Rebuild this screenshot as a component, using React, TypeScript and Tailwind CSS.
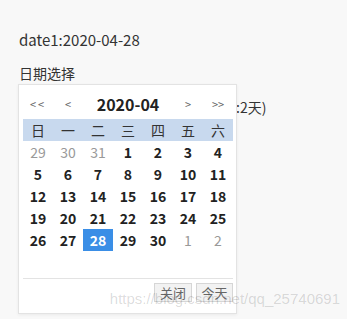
import React from 'react';

const weekDays = ['日', '一', '二', '三', '四', '五', '六'];

// 2020-04, starting Sunday 29 Mar
const days: { n: number; muted?: boolean; selected?: boolean }[] = [
  { n: 29, muted: true },
  { n: 30, muted: true },
  { n: 31, muted: true },
  ...Array.from({ length: 30 }, (_, i) => ({ n: i + 1, selected: i + 1 === 28 })),
  { n: 1, muted: true },
  { n: 2, muted: true },
];

function DatePicker() {
  return (
    <div className="absolute left-[18px] top-0 w-[219px] border border-[#e3e3e3] bg-white pl-1 pr-[3px] shadow-[0_1px_3px_rgba(0,0,0,0.06)]">
      {/* Header */}
      <div className="grid h-[34px] grid-cols-7 items-center pt-1 text-[#666]">
        <span className="text-center text-[11px] tracking-[2px]">&lt;&lt;</span>
        <span className="text-center text-[11px]">&lt;</span>
        <span className="col-span-3 text-center text-[16px] font-bold text-[#222]">2020-04</span>
        <span className="text-center text-[11px]">&gt;</span>
        <span className="text-center text-[11px]">&gt;&gt;</span>
      </div>

      {/* Week days */}
      <div className="grid h-[22px] grid-cols-7 items-center bg-[#c8d9ee] text-[14px] text-[#333]">
        {weekDays.map((d) => (
          <span key={d} className="text-center">
            {d}
          </span>
        ))}
      </div>

      {/* Days */}
      <div className="grid grid-cols-7">
        {days.map((d, i) => (
          <span
            key={i}
            className={
              d.selected
                ? 'flex h-[22px] items-center justify-center bg-[#3a8ee6] text-[14px] font-bold text-white'
                : d.muted
                  ? 'flex h-[22px] items-center justify-center text-[14px] text-[#999]'
                  : 'flex h-[22px] items-center justify-center text-[14px] font-bold text-[#222]'
            }
          >
            {d.n}
          </span>
        ))}
      </div>

      {/* Footer */}
      <div className="mt-[27px] flex justify-end gap-1 border-t border-[#e3e3e3] pb-[11px] pt-1">
        <button className="h-[19px] w-[38px] border border-[#d6d6d6] bg-[#f2f2f2] text-[13px] leading-none text-[#666]">
          关闭
        </button>
        <button className="h-[19px] w-[37px] border border-[#d6d6d6] bg-[#f2f2f2] text-[13px] leading-none text-[#666]">
          今天
        </button>
      </div>
    </div>
  );
}

export default function App() {
  return (
    <div className="relative h-[319px] w-[347px] overflow-hidden bg-[#f8f8f8] pl-[19px] pt-[30px] font-['Noto_Sans_CJK_SC',sans-serif] text-[14px] text-[#333]">
      <p className="text-[15px] leading-5">date1:2020-04-28</p>
      <p className="mt-[13px] leading-5">日期选择</p>

      <div className="relative -ml-[19px] mt-[1px] pl-[19px]">
        {/* text hidden behind the popup, only its tail shows */}
        <p className="flex pt-[13px] leading-5 whitespace-nowrap">
          <span className="w-[217px] shrink-0" />
          <span>:2天)</span>
        </p>
        <DatePicker />
      </div>

      {/* Watermark */}
      <span className="absolute right-[7px] top-[288px] font-['Liberation_Sans',Arial,sans-serif] text-[15px] text-black/15">
        https://blog.csdn.net/qq_25740691
      </span>
    </div>
  );
}
